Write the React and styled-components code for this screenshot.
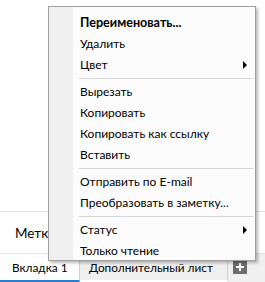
import React from "react";
import styled, { createGlobalStyle } from "styled-components";

const GlobalStyle = createGlobalStyle`
  html, body {
    margin: 0;
    padding: 0;
    background: #ffffff;
  }
  body {
    font-family: Lato, "Noto Sans", "Liberation Sans", sans-serif;
    font-size: 12px;
    color: #000;
  }
`;

const Page = styled.div`
  position: relative;
  width: 265px;
  height: 282px;
  overflow: hidden;
  display: flex;
  flex-direction: column;
  background: #fff;
`;

const TopArea = styled.div`
  height: 211px;
  border-bottom: 1px solid #e3e3e3;
`;

const TagsRow = styled.div`
  height: 41px;
  display: flex;
  align-items: center;
  padding-left: 15px;
  font-size: 13.5px;
`;

const TabBar = styled.div`
  flex: 1;
  display: flex;
  align-items: stretch;
  background: #f0f0f0;
  border-top: 1px solid #e3e3e3;
`;

const Tab = styled.div`
  display: flex;
  align-items: center;
  padding: ${(p) => (p.$active ? "0 0 0 12px" : "0 0 0 9px")};
  width: ${(p) => (p.$active ? "80px" : "148px")};
  box-sizing: border-box;
  background: ${(p) => (p.$active ? "#ffffff" : "#f0f0f0")};
  border-right: 1px solid #d0d0d0;
  border-bottom: ${(p) => (p.$active ? "2px solid #2b7cd3" : "2px solid #ffffff")};
  font-size: 11.8px;
  white-space: nowrap;
`;

const AddWrap = styled.div`
  display: flex;
  align-items: center;
  padding-left: 5px;
  padding-bottom: 3px;
`;

const AddButton = styled.div`
  width: 14px;
  height: 14px;
  background: #6e6e6e;
  display: flex;
  align-items: center;
  justify-content: center;
`;

const Menu = styled.div`
  position: absolute;
  left: 48px;
  top: 6px;
  width: 208px;
  height: 255px;
  padding-top: 5px;
  box-sizing: border-box;
  border: 1px solid #a0a0a0;
  box-shadow: 2px 2px 3px rgba(0, 0, 0, 0.28);
  display: flex;
  flex-direction: column;
  background: linear-gradient(to right, #f0f0f0 24px, #fcfcfc 24px);
`;

const Item = styled.div`
  position: relative;
  flex: none;
  height: 21px;
  display: flex;
  align-items: center;
  padding-left: 31px;
  font-weight: ${(p) => (p.$bold ? 700 : 400)};
  font-size: ${(p) => (p.$bold ? "12.6px" : "12px")};
  white-space: nowrap;
`;

const Arrow = styled.span`
  position: absolute;
  right: 8px;
  top: 7px;
  width: 0;
  height: 0;
  border-top: 4px solid transparent;
  border-bottom: 4px solid transparent;
  border-left: 4px solid #000;
`;

const Separator = styled.div`
  flex: none;
  height: 6px;
  display: flex;
  align-items: center;
  padding-left: 30px;
  padding-right: 2px;

  &::after {
    content: "";
    flex: 1;
    height: 1px;
    background: #d7d7d7;
  }
`;

const items = [
  { label: "Переименовать...", bold: true },
  { label: "Удалить" },
  { label: "Цвет", sub: true },
  { sep: true },
  { label: "Вырезать" },
  { label: "Копировать" },
  { label: "Копировать как ссылку" },
  { label: "Вставить" },
  { sep: true },
  { label: "Отправить по E-mail" },
  { label: "Преобразовать в заметку..." },
  { sep: true },
  { label: "Статус", sub: true },
  { label: "Только чтение" },
];

const App = () => {
  return (
    <Page>
      <GlobalStyle />
      <TopArea />
      <TagsRow>Метки</TagsRow>
      <TabBar>
        <Tab $active>Вкладка 1</Tab>
        <Tab>Дополнительный лист</Tab>
        <AddWrap>
          <AddButton>
            <svg width="10" height="10" viewBox="0 0 10 10">
              <rect x="4" y="1" width="2" height="8" fill="#fff" />
              <rect x="1" y="4" width="8" height="2" fill="#fff" />
            </svg>
          </AddButton>
        </AddWrap>
      </TabBar>
      <Menu>
        {items.map((it, i) =>
          it.sep ? (
            <Separator key={i} />
          ) : (
            <Item key={i} $bold={it.bold}>
              {it.label}
              {it.sub && <Arrow />}
            </Item>
          )
        )}
      </Menu>
    </Page>
  );
};

export default App;
